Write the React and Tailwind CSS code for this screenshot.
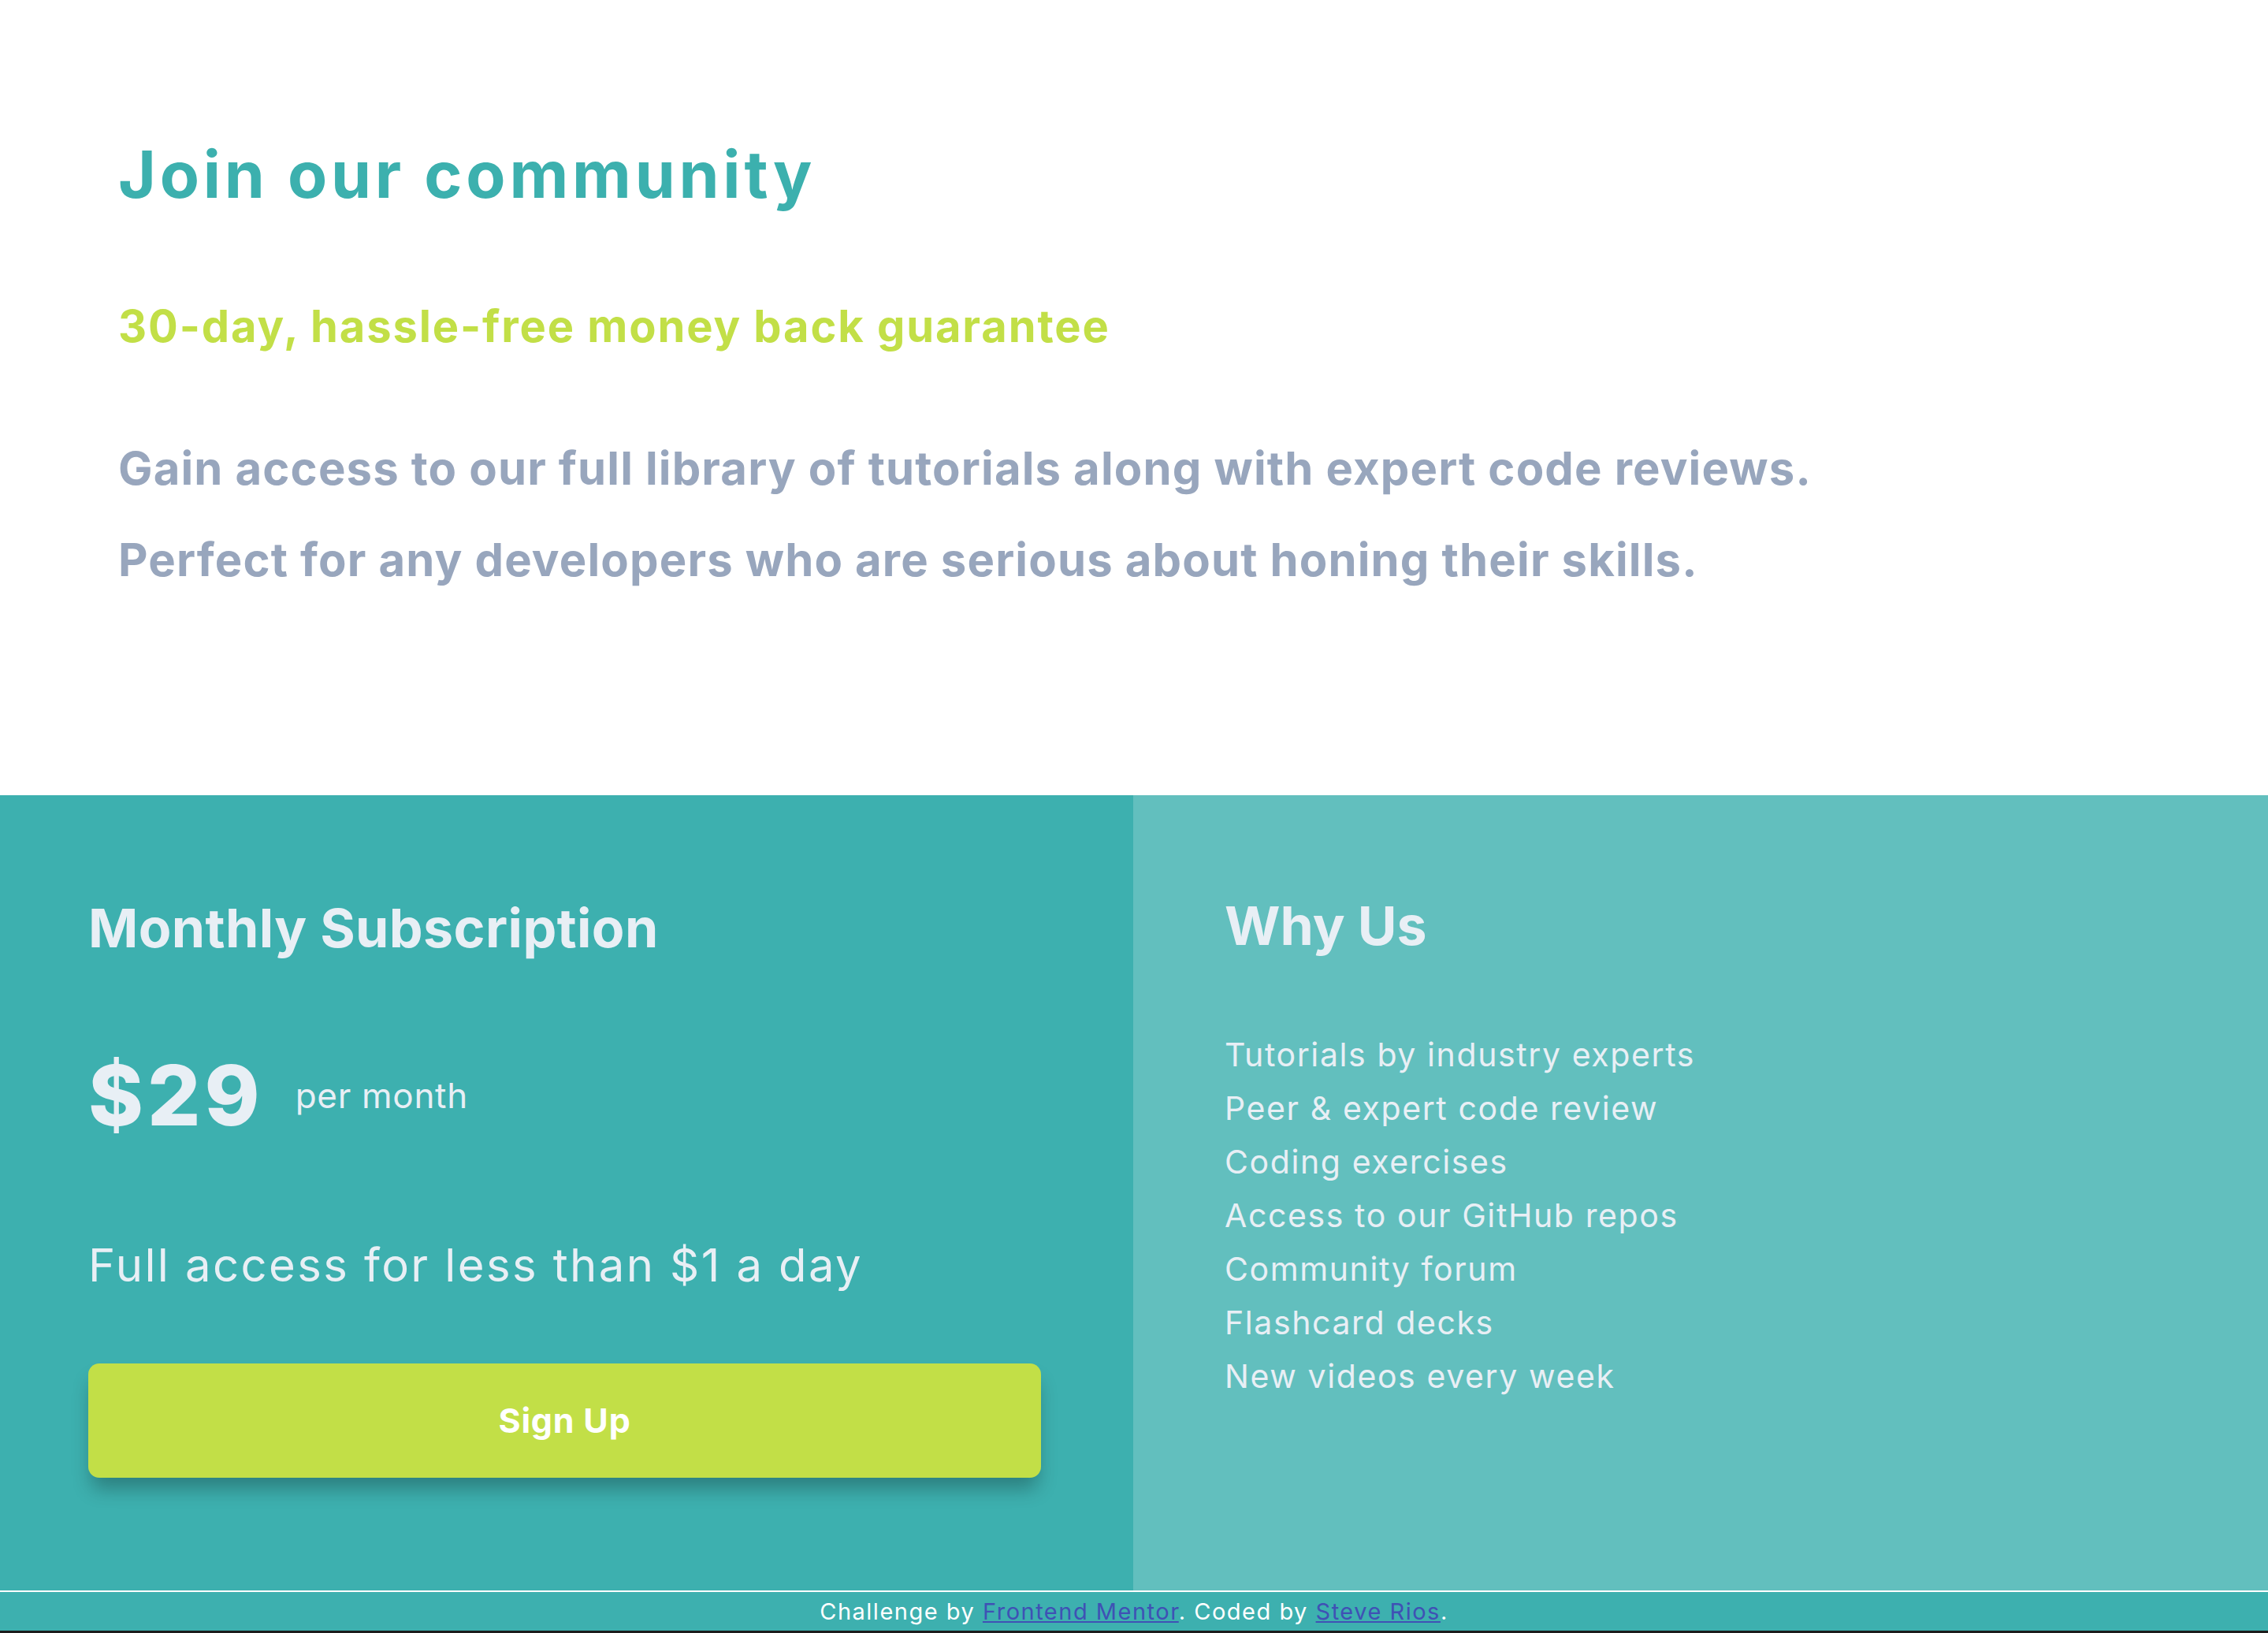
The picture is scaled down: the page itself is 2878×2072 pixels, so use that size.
const features = [
  "Tutorials by industry experts",
  "Peer & expert code review",
  "Coding exercises",
  "Access to our GitHub repos",
  "Community forum",
  "Flashcard decks",
  "New videos every week",
];

function Intro() {
  return (
    <section className="h-[1009px] bg-white pl-[150px] pt-[181px]">
      <h1 className="text-[82px] leading-[82px] font-bold text-[#3cb0ae] tracking-[4.8px]">
        Join our community
      </h1>
      <h2 className="mt-[123px] text-[56px] leading-[56px] font-bold text-[#c2df47] tracking-[1.9px]">
        30-day, hassle-free money back guarantee
      </h2>
      <p className="mt-[94px] text-[58px] leading-[116px] font-bold text-[#98a6bd] tracking-[1.15px]">
        Gain access to our full library of tutorials along with expert code reviews.
        <br />
        Perfect for any developers who are serious about honing their skills.
      </p>
    </section>
  );
}

function Subscription() {
  return (
    <div className="bg-[#3db0af] pl-[112px] pt-[134px] text-[#e8eff5]">
      <h2 className="text-[68px] leading-[68px] font-bold tracking-[0.4px]">Monthly Subscription</h2>
      <div className="mt-[126px] flex items-center gap-[40px]">
        <span className="text-[106px] leading-[106px] font-extrabold tracking-[5px]">$29</span>
        <span className="text-[44px] leading-[44px] font-normal tracking-[0.7px]">per month</span>
      </div>
      <p className="mt-[133px] text-[58px] leading-[58px] font-normal tracking-[2.4px]">
        Full access for less than $1 a day
      </p>
      <button className="mt-[96px] flex h-[145px] w-[1209px] items-center justify-center rounded-[14px] bg-[#c2df47] text-[43px] font-bold text-white tracking-[0.8px] shadow-[0_18px_24px_-4px_rgba(0,0,0,0.28)]">
        Sign Up
      </button>
    </div>
  );
}

function WhyUs() {
  return (
    <div className="bg-[#62bfbe] pl-[116px] pt-[131px] text-[#e8eff5]">
      <h2 className="text-[68px] leading-[68px] font-bold">Why Us</h2>
      <ul className="mt-[96px]">
        {features.map((item) => (
          <li key={item} className="text-[41px] leading-[68px] font-normal tracking-[1.6px]">
            {item}
          </li>
        ))}
      </ul>
    </div>
  );
}

export default function App() {
  return (
    <div className="w-[2878px] font-[Inter,sans-serif]">
      <Intro />

      {/* pricing grid */}
      <section className="grid h-[1009px] grid-cols-[1438px_1440px]">
        <Subscription />
        <WhyUs />
      </section>

      <footer className="h-[51px] border-t-2 border-white bg-[#3db0af] text-center text-[29px] leading-[49px] text-white tracking-[1.5px]">
        Challenge by{" "}
        <a href="#" className="text-[#3f51b5] underline">
          Frontend Mentor
        </a>
        . Coded by{" "}
        <a href="#" className="text-[#3f51b5] underline">
          Steve Rios
        </a>
        .
      </footer>
      <div className="h-[3px] bg-[#1c1c1c]" />
    </div>
  );
}
